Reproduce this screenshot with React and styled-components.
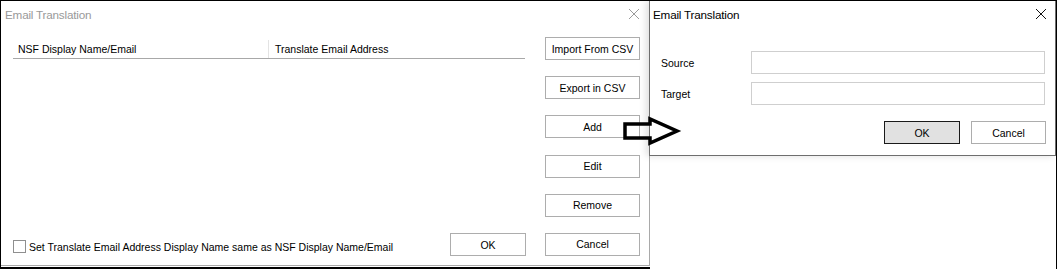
import React from "react";
import styled, { createGlobalStyle } from "styled-components";

const Global = createGlobalStyle`
  html, body { margin: 0; padding: 0; background: #fff; }
  * { box-sizing: border-box; }
  body { font-family: "Liberation Sans", Arial, sans-serif; font-size: 10.5px; color: #000; }
`;

const Frame = styled.div`
  position: relative;
  width: 1057px;
  height: 269px;
  border-top: 1px solid #000;
  border-left: 1px solid #000;
  border-right: 1px solid #000;
  display: flex;
  align-items: flex-start;
  overflow: hidden;
`;

const LeftWrap = styled.div`
  width: 649px;
  height: 268px;
  padding-bottom: 1px;
  border-bottom: 2px solid #000;
  flex: none;
`;

const Dialog = styled.div`
  background: #fff;
  display: flex;
  flex-direction: column;
  width: ${p => p.$w}px;
  height: ${p => p.$h}px;
  border-right: 1px solid ${p => p.$border};
  border-bottom: 1px solid ${p => p.$border};
  border-left: ${p => (p.$active ? `1px solid ${p.$border}` : "none")};
`;

const RightDialog = styled(Dialog)`
  position: relative;
  z-index: 2;
  margin-left: -1px;
  flex: none;
  box-shadow: -3px 0 7px rgba(0, 0, 0, 0.13);
`;

const TitleBar = styled.div`
  height: 30px;
  display: flex;
  align-items: center;
  justify-content: space-between;
  padding: 0 ${p => p.$pr}px 4px ${p => p.$pl}px;
  flex: none;
`;

const Title = styled.span`
  font-size: 11.7px;
  letter-spacing: -0.2px;
  color: ${p => (p.$active ? "#000" : "#999")};
`;

const CloseIcon = ({ color }) => (
  <svg width="12" height="12" viewBox="0 0 12 12">
    <path d="M1 1 L11 11 M11 1 L1 11" stroke={color} strokeWidth="1" fill="none" />
  </svg>
);

const LeftBody = styled.div`
  flex: 1;
  display: flex;
  gap: 19px;
  padding: 6px 0 9px 12px;
`;

const LeftColumn = styled.div`
  width: 513px;
  display: flex;
  flex-direction: column;
`;

const List = styled.div`
  flex: 1;
  padding-top: 3px;
`;

const ListHeader = styled.div`
  display: flex;
  width: 512px;
  height: 19px;
  border-bottom: 1px solid #a8a8a8;
`;

const HeaderCell = styled.div`
  width: ${p => p.$w}px;
  padding-left: ${p => p.$pl}px;
  display: flex;
  align-items: center;
  border-right: ${p => (p.$sep ? "1px solid #e3e3e3" : "none")};
`;

const BottomRow = styled.div`
  height: 23px;
  display: flex;
  align-items: center;
  justify-content: space-between;
`;

const CheckLabel = styled.label`
  display: flex;
  align-items: center;
  gap: 3px;
  margin-top: 4px;
`;

const CheckBox = styled.span`
  width: 13px;
  height: 13px;
  border: 1px solid #8f8f8f;
  background: #fff;
  display: inline-block;
`;

const ButtonColumn = styled.div`
  display: flex;
  flex-direction: column;
  justify-content: space-between;
  width: 95px;
`;

const Button = styled.button`
  font-family: "Liberation Sans", Arial, sans-serif;
  font-size: 10.5px;
  color: #000;
  width: ${p => p.$w || 95}px;
  height: 23px;
  padding: 0;
  background: ${p => (p.$default ? "#e1e1e1" : "#fff")};
  border: 1px solid ${p => (p.$default ? "#1a1a1a" : "#adadad")};
  flex: none;
`;

const Form = styled.div`
  padding: 20px 9px 0 11px;
  display: flex;
  flex-direction: column;
  gap: 8px;
`;

const FieldRow = styled.div`
  display: flex;
  align-items: center;
`;

const Label = styled.span`
  width: 90px;
`;

const Input = styled.div`
  width: 294px;
  height: 23px;
  border: 1px solid #cfcfcf;
  background: #fff;
`;

const ActionRow = styled.div`
  display: flex;
  justify-content: flex-end;
  gap: 11px;
  margin-top: 8px;
`;

const Arrow = styled.svg`
  position: absolute;
  left: 619px;
  top: 113px;
  z-index: 5;
  overflow: visible;
`;

export default function App() {
  return (
    <>
      <Global />
      <Frame>
        <LeftWrap>
          <Dialog $w={649} $h={265} $border="#a9a9a9">
            <TitleBar $pl={4} $pr={9}>
              <Title>Email Translation</Title>
              <CloseIcon color="#9a9a9a" />
            </TitleBar>
            <LeftBody>
              <LeftColumn>
                <List>
                  <ListHeader>
                    <HeaderCell $w={256} $pl={5} $sep>NSF Display Name/Email</HeaderCell>
                    <HeaderCell $w={255} $pl={6}>Translate Email Address</HeaderCell>
                  </ListHeader>
                </List>
                <BottomRow>
                  <CheckLabel>
                    <CheckBox />
                    Set Translate Email Address Display Name same as NSF Display Name/Email
                  </CheckLabel>
                  <Button $w={76}>OK</Button>
                </BottomRow>
              </LeftColumn>
              <ButtonColumn>
                <Button>Import From CSV</Button>
                <Button>Export in CSV</Button>
                <Button>Add</Button>
                <Button>Edit</Button>
                <Button>Remove</Button>
                <Button>Cancel</Button>
              </ButtonColumn>
            </LeftBody>
          </Dialog>
        </LeftWrap>
        <RightDialog $w={407} $h={155} $border="#6e6e6e" $active>
          <TitleBar $pl={3} $pr={8}>
            <Title $active>Email Translation</Title>
            <CloseIcon color="#111" />
          </TitleBar>
          <Form>
            <FieldRow>
              <Label>Source</Label>
              <Input />
            </FieldRow>
            <FieldRow>
              <Label>Target</Label>
              <Input />
            </FieldRow>
            <ActionRow>
              <Button $w={76} $default>OK</Button>
              <Button $w={75}>Cancel</Button>
            </ActionRow>
          </Form>
        </RightDialog>
        <Arrow width="62" height="34" viewBox="0 0 62 34">
          <polygon
            points="5,10 30,10 30,5 57,17 30,29 30,24 5,24"
            fill="none"
            stroke="#000"
            strokeWidth="3.5"
            strokeLinejoin="miter"
          />
        </Arrow>
      </Frame>
    </>
  );
}
